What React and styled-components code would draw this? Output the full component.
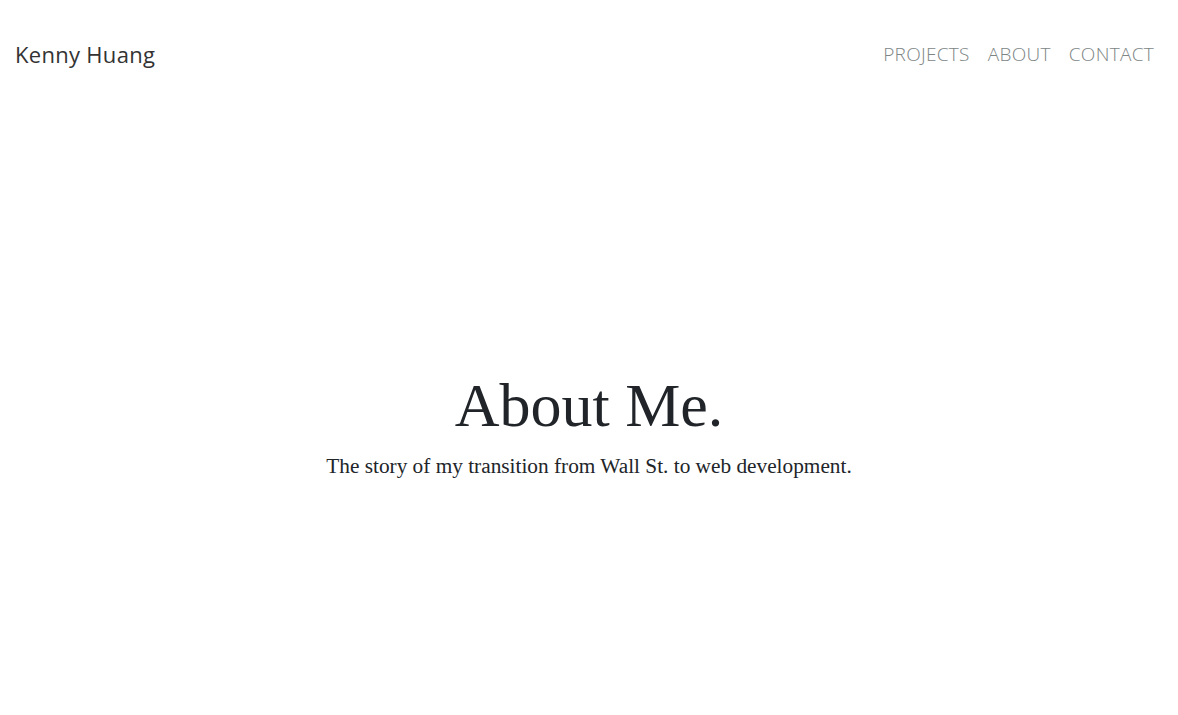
import styled, { createGlobalStyle } from "styled-components";

const GlobalStyle = createGlobalStyle`
  html, body {
    margin: 0;
    padding: 0;
    background: #ffffff;
  }
`;

const Page = styled.div`
  min-height: 100vh;
  display: flex;
  flex-direction: column;
`;

const Header = styled.header`
  height: 107px;
  padding: 0 24px 0 15px;
  display: flex;
  align-items: center;
  justify-content: space-between;
  box-sizing: border-box;
`;

const Brand = styled.a`
  font-family: "Open Sans", "Liberation Sans", sans-serif;
  font-weight: 400;
  font-size: 22px;
  color: #333333;
  text-decoration: none;
  letter-spacing: 0.3px;
`;

const Nav = styled.nav`
  display: flex;
  gap: 18px;
`;

const NavLink = styled.a`
  font-family: "Open Sans", "Liberation Sans", sans-serif;
  font-weight: 300;
  font-size: 19px;
  letter-spacing: 0.3px;
  color: #7d8585;
  text-decoration: none;
  text-transform: uppercase;
`;

const Hero = styled.main`
  padding-top: 261px;
  text-align: center;
`;

const Title = styled.h1`
  margin: 0;
  font-family: "Liberation Serif", serif;
  font-weight: 400;
  font-size: 62px;
  line-height: 1.2;
  color: #212529;
`;

const Subtitle = styled.p`
  margin: 12px 0 0;
  font-family: "Liberation Serif", serif;
  font-size: 21.3px;
  color: #212529;
`;

export default function App() {
  return (
    <Page>
      <GlobalStyle />
      <Header>
        <Brand href="#">Kenny Huang</Brand>
        <Nav>
          <NavLink href="#">Projects</NavLink>
          <NavLink href="#">About</NavLink>
          <NavLink href="#">Contact</NavLink>
        </Nav>
      </Header>
      <Hero>
        <Title>About Me.</Title>
        <Subtitle>The story of my transition from Wall St. to web development.</Subtitle>
      </Hero>
    </Page>
  );
}
